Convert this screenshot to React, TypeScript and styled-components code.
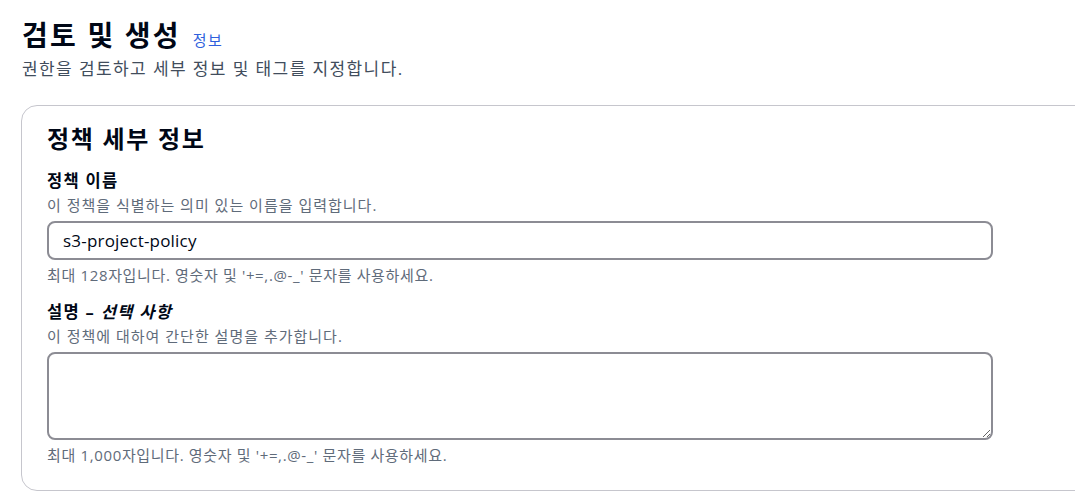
import React from 'react';
import styled, { createGlobalStyle } from 'styled-components';

const GlobalStyle = createGlobalStyle`
  body {
    margin: 0;
    background: #ffffff;
    overflow: hidden;
    font-family: "Open Sans", "Noto Sans CJK KR", sans-serif;
    color: #000716;
  }
`;

const Page = styled.main`
  width: 1120px;
  padding: 18px 0 0 22px;
`;

const TitleRow = styled.div`
  display: flex;
  align-items: baseline;
  gap: 12px;
`;

const Title = styled.h1`
  margin: 0;
  font-size: 28px;
  line-height: 34px;
  font-weight: 700;
  letter-spacing: 2.2px;
  color: #000716;
`;

const InfoLink = styled.a`
  font-size: 15px;
  letter-spacing: 1.5px;
  color: #2f5fdd;
  text-decoration: none;
`;

const Subtitle = styled.p`
  margin: 6px 0 0;
  font-size: 17px;
  line-height: 22px;
  letter-spacing: 1.4px;
  color: #414d5c;
`;

const Card = styled.section`
  margin: 25px 0 0 -1px;
  width: 1100px;
  border: 1px solid #c6c6cd;
  border-radius: 16px;
  padding: 18px 25px 25px;
`;

const CardHeading = styled.h2`
  margin: 0 0 16px;
  font-size: 24px;
  line-height: 30px;
  font-weight: 700;
  letter-spacing: 1.7px;
`;

const Field = styled.div<{ $gapTop?: number }>`
  display: flex;
  flex-direction: column;
  width: 946px;
  margin-top: ${(p) => p.$gapTop ?? 0}px;
`;

const Label = styled.label`
  font-size: 16.5px;
  line-height: 22px;
  font-weight: 700;
  letter-spacing: 1.3px;
  color: #000716;

  em {
    font-style: italic;
  }
`;

const Description = styled.div`
  margin-top: 3px;
  font-size: 15px;
  line-height: 20px;
  letter-spacing: 1px;
  color: #5f6b7a;
`;

const Hint = styled.div`
  margin-top: 5px;
  font-size: 15px;
  line-height: 20px;
  letter-spacing: 0.65px;
  color: #5f6b7a;
`;

const TextInput = styled.input`
  box-sizing: border-box;
  margin-top: 6px;
  width: 100%;
  height: 39px;
  border: 2px solid #8c8c94;
  border-radius: 8px;
  padding: 0 14px;
  font-family: "Open Sans", "Noto Sans CJK KR", sans-serif;
  font-size: 17px;
  letter-spacing: 0.2px;
  color: #000716;
  background: #ffffff;
  outline: none;
`;

const TextArea = styled.textarea`
  box-sizing: border-box;
  margin-top: 6px;
  width: 100%;
  height: 88px;
  border: 2px solid #8c8c94;
  border-radius: 8px;
  padding: 8px 14px;
  font-family: "Open Sans", "Noto Sans CJK KR", sans-serif;
  font-size: 16px;
  background: #ffffff;
  outline: none;
  resize: vertical;
  display: block;
`;

export default function App() {
  return (
    <>
      <GlobalStyle />
      <Page>
        <TitleRow>
          <Title>검토 및 생성</Title>
          <InfoLink href="#">정보</InfoLink>
        </TitleRow>
        <Subtitle>권한을 검토하고 세부 정보 및 태그를 지정합니다.</Subtitle>

        <Card>
          <CardHeading>정책 세부 정보</CardHeading>

          <Field>
            <Label>정책 이름</Label>
            <Description>이 정책을 식별하는 의미 있는 이름을 입력합니다.</Description>
            <TextInput defaultValue="s3-project-policy" />
            <Hint>최대 128자입니다. 영숫자 및 '+=,.@-_' 문자를 사용하세요.</Hint>
          </Field>

          <Field $gapTop={16}>
            <Label>
              설명 – <em>선택 사항</em>
            </Label>
            <Description>이 정책에 대하여 간단한 설명을 추가합니다.</Description>
            <TextArea />
            <Hint>최대 1,000자입니다. 영숫자 및 '+=,.@-_' 문자를 사용하세요.</Hint>
          </Field>
        </Card>
      </Page>
    </>
  );
}
